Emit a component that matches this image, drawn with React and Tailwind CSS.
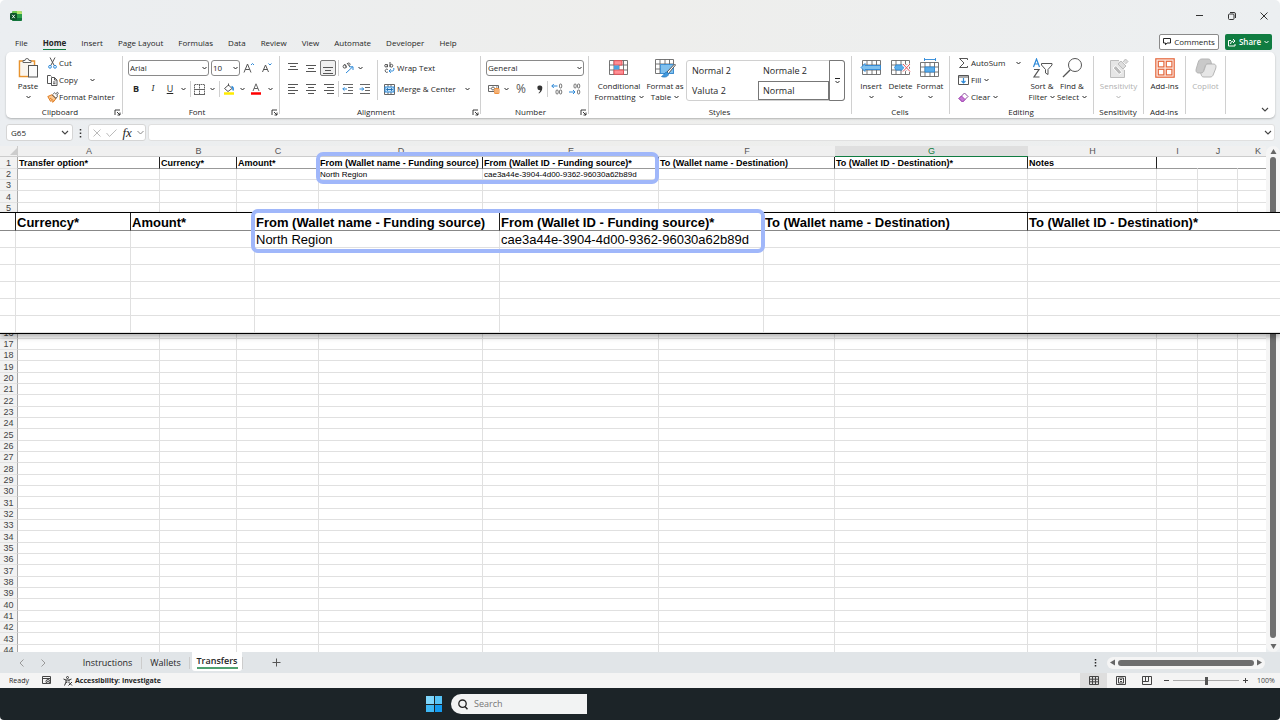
import React, { useState } from 'react';
import clsx from 'clsx';

// Small svg wrapper, every ribbon icon goes through this
const Icon = ({ w = 14, h = 14, className, children }) => (
    <svg
        width={w}
        height={h}
        viewBox={`0 0 ${w} ${h}`}
        fill="none"
        stroke="currentColor"
        strokeWidth="1"
        aria-hidden="true"
        className={clsx('shrink-0', className)}
    >
        {children}
    </svg>
);

const Chevron = ({ className }) => (
    <Icon w={5} h={4} className={className}><path d="M.5 1l2 2 2-2" /></Icon>
);

const BigChevron = () => (
    <Icon w={8} h={5} className="text-[#444]"><path d="M1 1l3 3 3-3" strokeWidth="1.1" /></Icon>
);

const Tool = ({ label, className, children }) => (
    <button type="button" aria-label={label} className={clsx('flex h-4 shrink-0 items-center justify-center', className)}>
        {children}
    </button>
);

const Divider = ({ className = 'h-4' }) => <span className={clsx('w-px shrink-0 bg-[#d0d0d0]', className)} />;

// Ribbon group with its caption and the optional dialog launcher
const Group = ({ title, launcher, className, children }) => (
    <section className={clsx('flex shrink-0 pt-1', className)}>
        <div className="flex min-w-0 flex-1 flex-col">
            <div className="flex h-[50px]">{children}</div>
            <div className="flex h-3 items-center pr-px">
                <span className="flex-1 text-center text-[8px] leading-3">{title}</span>
                {launcher && (
                    <button type="button" aria-label={`${title} settings`}>
                        <Icon w={7} h={7}><path d="M1 6V1h5M3 3l3 3M6 3.500V6H3.500" strokeWidth=".9" /></Icon>
                    </button>
                )}
            </div>
        </div>
        <Divider className="mb-1" />
    </section>
);

// Tall button: icon on top, one or two lines of text below
const TallButton = ({ icon, lines, arrow, className }) => (
    <button type="button" className={clsx('flex shrink-0 flex-col items-center text-[8px] leading-[11px] whitespace-nowrap', className)}>
        <span className="flex h-6 items-center">{icon}</span>
        <span>{lines[0]}</span>
        <span className="flex h-[11px] items-center gap-[3px]">
            {lines[1]}
            {arrow && <Chevron />}
        </span>
    </button>
);

const Dropdown = ({ label, value, className }) => (
    <div className={clsx('flex h-4 items-center rounded-[3px] border border-[#8a8a8a] bg-white pr-px', className)}>
        <select aria-label={label} defaultValue={value} className="min-w-0 flex-1 appearance-none bg-transparent pl-px text-[8px] leading-3 outline-none">
            <option>{value}</option>
        </select>
        <Chevron />
    </div>
);

const Lines = ({ rows }) => (
    <Icon w={12} h={12} className="text-[#555]">
        {rows.map(([x, y, len]) => <path key={y} d={`M${x} ${y}.5h${len}`} />)}
    </Icon>
);

/* ---------- icons ---------- */

const ExcelLogo = () => (
    <Icon w={12} h={12}>
        <rect x="2" y="1" width="10" height="10" rx="1.5" fill="#2b9e4b" stroke="none" />
        <path d="M3.500 1H7v3H2V2.500A1.500 1.500 0 013.500 1z" fill="#6cc94f" stroke="none" />
        <path d="M7 1h3.500A1.500 1.500 0 0112 2.500V4H7z" fill="#b4e36c" stroke="none" />
        <path d="M2 8h10v1.500a1.500 1.500 0 01-1.500 1.500h-7A1.500 1.500 0 012 9.500z" fill="#12743b" stroke="none" />
        <rect x="0" y="3" width="7" height="7" rx="1.200" fill="#0d5429" stroke="none" />
        <path d="M2.200 4.800l2.600 3.400M4.800 4.800L2.200 8.200" stroke="#fff" strokeWidth=".9" />
    </Icon>
);

const PasteIcon = () => (
    <Icon w={20} h={22}>
        <path d="M5 4H1.500v15.500H10" stroke="#e8932e" strokeWidth="1.500" />
        <path d="M13 4h3.500v4" stroke="#e8932e" strokeWidth="1.500" />
        <path d="M3 18V5.500h12V9h-5v9z" fill="#faf5ee" stroke="none" />
        <path d="M5 5.500V3.500h2a2 2 0 014 0h2v2z" fill="#fff" stroke="#666" />
        <rect x="10.500" y="8.500" width="9" height="11.500" fill="#fafafa" stroke="#555" />
    </Icon>
);

const CutIcon = () => (
    <Icon w={9} h={12}>
        <path d="M2 .5l4.200 8M7 .5L2.800 8.500" stroke="#555" />
        <circle cx="2" cy="9.800" r="1.400" stroke="#2b88d8" />
        <circle cx="7" cy="9.800" r="1.400" stroke="#2b88d8" />
    </Icon>
);

const CopyIcon = () => (
    <Icon w={11} h={12} className="text-[#555]">
        <path d="M4 9.500H.5v-8h3l1 1M4.500 3.500h3l2.500 2.500v5.500H4.500zM7.500 3.500V6H10M6 8h2.500M6 9.700h2.500" />
    </Icon>
);

const PainterIcon = () => (
    <Icon w={12} h={12}>
        <path d="M.8 5.500l4.200-1.800L9 7.500 6 11.300 4.300 9.800 3.500 10.300z" fill="#f9c58d" stroke="#e07b1f" />
        <path d="M3 7l3.500 2.700" stroke="#e07b1f" />
        <path d="M5 3.700L9 7.500M6.200 3l1.300-1.200 1.200 1 1.800-1.500L11.300 2.300 9.800 4l.7 1.200L9 7.500" stroke="#555" />
    </Icon>
);

const BordersIcon = () => (
    <Icon w={11} h={11} className="text-[#666]">
        <path d="M.5.500h10v10H.5zM5.500.5v10" strokeDasharray="1.500 .5" />
        <path d="M0 5.500h11M0 10.500h11" />
    </Icon>
);

const FillIcon = () => (
    <Icon w={12} h={12}>
        <path d="M1.500 5.500l4-3.500 3.500 3.500-4 3z" stroke="#555" />
        <path d="M5.500 3V.5" stroke="#555" />
        <path d="M8.500 3.500c1.500.5 2 2 1.500 4" stroke="#2b88d8" strokeWidth="1.500" />
        <path d="M1 10.500h10" stroke="#ffeb00" strokeWidth="2.500" />
    </Icon>
);

const FontColorIcon = () => (
    <Icon w={12} h={12}>
        <path d="M3 8L6 .8 9 8M4 5.500h4" stroke="#666" />
        <path d="M1 10.500h10" stroke="#f00" strokeWidth="2.500" />
    </Icon>
);

const GrowFont = ({ down }) => (
    <Icon w={12} h={12}>
        <path d={down ? 'M1.500 10L4.500 3l3 7M2.500 7.500h4' : 'M1 10.500L4.500 2l3.500 8.500M2.300 7.500h4.400'} stroke="#555" />
        <path d={down ? 'M7.500 1.500l1.500 1.500 1.500-1.500' : 'M8 3l1.500-1.500L11 3'} stroke="#2b88d8" />
    </Icon>
);

const OrientationIcon = () => (
    <Icon w={12} h={12}>
        <circle cx="2.700" cy="4.500" r="1.600" stroke="#555" />
        <path d="M4.500 5.500L2.500 2M5 1l3 4M7.300 3.500a1.300 1.300 0 10-1.800-1.500" stroke="#555" />
        <path d="M4 11l6.500-6M7.500 4.800H11V8" stroke="#2b88d8" />
    </Icon>
);

const IndentIcon = ({ out }) => (
    <Icon w={12} h={12}>
        <path d="M1 1.500h10M6 4.500h5M6 7.500h5M1 10.500h10" stroke="#666" />
        <path d={out ? 'M5 6H.8M2.500 4.300L.8 6l1.700 1.700' : 'M.5 6h4.200M3 4.300L4.700 6 3 7.700'} stroke="#2b88d8" />
    </Icon>
);

const WrapIcon = () => (
    <Icon w={11} h={12}>
        <circle cx="2" cy="3.700" r="1.300" stroke="#555" />
        <path d="M3.500 2.300v2.900M6 0v5.200" stroke="#555" />
        <circle cx="7.400" cy="3.700" r="1.400" stroke="#555" />
        <path d="M3.800 7.500a1.600 1.600 0 100 2.500" stroke="#555" />
        <path d="M9.800 6v1.500q0 1.500-1.500 1.500H5M6.800 7.200L5 9l1.800 1.800" stroke="#2b88d8" />
    </Icon>
);

const MergeIcon = () => (
    <Icon w={11} h={11}>
        <path d="M.5.500h10v10H.5zM4 .5V3M7 .5V3M4 8v2.500M7 8v2.500" stroke="#666" />
        <path d="M1 3h9v5H1z" fill="#cde6f8" stroke="#2b88d8" />
        <path d="M2.500 5.500h6M4 4.200L2.600 5.500 4 6.800M7 4.200l1.400 1.300L7 6.800" stroke="#1f6fb5" />
    </Icon>
);

const CurrencyIcon = () => (
    <Icon w={12} h={12}>
        <path d="M.5 2.500h10v6H.5z" stroke="#666" />
        <circle cx="5" cy="5.500" r="1.500" stroke="#666" />
        <path d="M1.500 5.500h1M8 4h1.500" stroke="#666" />
        <rect x="6" y="5" width="5.500" height="6" rx="1.500" fill="#f0903c" stroke="none" />
        <path d="M6.500 7h4.500M6.500 9h4.500" stroke="#fff" strokeWidth=".6" />
    </Icon>
);

const DecimalIcon = ({ less }) => (
    <Icon w={12} h={12}>
        <rect x="8.500" y="1" width="2.200" height="4" rx="1.100" stroke="#666" strokeWidth=".9" />
        <rect x="8.500" y="7" width="2.200" height="4" rx="1.100" stroke="#666" strokeWidth=".9" />
        <rect x="5" y={less ? 1 : 7} width="2.200" height="4" rx="1.100" stroke="#666" strokeWidth=".9" />
        <path d={less ? 'M0 9h6M4 7l2 2-2 2' : 'M6.500 3H.8M2.800 1l-2 2 2 2'} stroke="#2b88d8" />
    </Icon>
);

const GridBase = ({ x = 0, y = 0, w = 18, h = 14 }) => (
    <path
        d={`M${x + 0.5} ${y + 0.5}h${w}v${h}h-${w}zM${x + 0.5} ${y + 5}h${w}M${x + 0.5} ${y + 10}h${w}M${x + 5} ${y + 0.5}v${h}M${x + 10} ${y + 0.5}v${h}M${x + 14.5} ${y + 0.5}v${h}`}
        stroke="#666"
        strokeWidth=".9"
        fill="#fff"
    />
);

const ConditionalIcon = () => (
    <Icon w={20} h={16}>
        <GridBase />
        <path d="M5 .7h8V5H5zM5 10h9.500v4.300H5z" fill="#ff8f95" stroke="#e4545b" />
        <path d="M5 5.500h5v4H5z" fill="#4ba3e3" stroke="none" />
    </Icon>
);

const FormatTableIcon = () => (
    <Icon w={21} h={19}>
        <GridBase />
        <path d="M5.500 5.500h13v9h-13z" fill="#7fc0ee" stroke="#2b88d8" strokeWidth=".8" />
        <path d="M19.500 5l-7.500 8 1.500 1.500L20.500 6z" fill="#fff" stroke="#555" />
        <path d="M12 13c-2.500 0-2.500 3-5.500 4.500 3.500 1.500 7.500 0 7-3z" fill="#3f98dc" stroke="#1f6fb5" strokeWidth=".7" />
    </Icon>
);

const InsertCellsIcon = () => (
    <Icon w={22} h={16}>
        <GridBase x={2} />
        <path d="M1 7.500l4-4v2h15.500v4H5v2z" fill="#7fc0ee" stroke="#2b88d8" strokeWidth=".9" />
    </Icon>
);

const DeleteCellsIcon = () => (
    <Icon w={20} h={16}>
        <GridBase />
        <path d="M5 5h8.500l-1 5H5l-1.500-2.500z" fill="#5aadea" stroke="#2b88d8" strokeWidth=".8" />
        <path d="M12 4l7 7.500M19 4l-7 7.500" stroke="#fff" strokeWidth="3" />
        <path d="M12 4l7 7.500M19 4l-7 7.500" stroke="#e8545a" />
    </Icon>
);

const FormatCellsIcon = () => (
    <Icon w={20} h={20}>
        <path d="M4.500 0v3M15.500 0v3M4.500 1.500h11" stroke="#2b88d8" strokeWidth=".9" />
        <GridBase y={4} />
        <path d="M5 9h9.500v5H5z" fill="#5aadea" stroke="#2b88d8" strokeWidth=".8" />
    </Icon>
);

const SumIcon = () => (
    <Icon w={11} h={12} className="text-[#555]"><path d="M9.500 3V1.500h-8L6 6l-4.500 4.500h8V9" /></Icon>
);

const FillDownIcon = () => (
    <Icon w={11} h={11}>
        <path d="M.5.500h10v9H.5z" stroke="#555" />
        <path d="M.5 2h10" stroke="#555" />
        <path d="M5.500 3v5M3.500 6l2 2 2-2" stroke="#2b88d8" strokeWidth="1.200" />
    </Icon>
);

const ClearIcon = () => (
    <Icon w={11} h={11}>
        <path d="M1 6.500L6.500 1 10 4.500 4.500 10z" stroke="#8e4b9e" fill="#fff" />
        <path d="M1 6.500l2.500-2.500L7 7.500 4.500 10z" fill="#c77ad6" stroke="#a33fb5" />
    </Icon>
);

const SortIcon = () => (
    <Icon w={21} h={20}>
        <path d="M1.500 9L4.500 1l3 8M2.500 6h4" stroke="#2b88d8" strokeWidth="1.200" />
        <path d="M2 11.500h5l-5 7.500h5.500" stroke="#555" strokeWidth="1.200" />
        <path d="M9.500 5.500h10.500v1.500l-4 4.500v5l-2.500-1.500v-3.500l-4-4.500z" stroke="#555" />
    </Icon>
);

const FindIcon = () => (
    <Icon w={21} h={20} className="text-[#555]">
        <circle cx="13" cy="7" r="6.500" />
        <path d="M8.300 11.700L1 19" strokeWidth="1.300" />
    </Icon>
);

const SensitivityIcon = () => (
    <Icon w={20} h={21} className="text-[#bdbdbd]">
        <path d="M10 2.500H1.500v17h14V12" fill="#e6e6e6" />
        <path d="M4 10l3-2.500 6 7-3 2z" fill="#bbb" stroke="#fff" />
        <path d="M9 6l3-3 5 5-3 3zM14 4l2.500-3L19 3.500 16.500 6" fill="#ddd" />
    </Icon>
);

const AddinsIcon = () => (
    <Icon w={20} h={20}>
        <rect x=".8" y=".8" width="18.400" height="18.400" fill="#fdece6" stroke="#e4673c" strokeWidth="1.200" />
        {[3, 11].map((x) => [3, 11].map((y) => (
            <rect key={`${x}-${y}`} x={x + 0.3} y={y + 0.3} width="5.600" height="5.600" fill="#fff" stroke="#e4673c" strokeWidth="1.200" />
        )))}
    </Icon>
);

const CopilotIcon = () => (
    <Icon w={22} h={20} className="text-[#b5b5b5]">
        <path d="M7 1h6c2 0 2.500 1 3 3l.5 2h-4c-1.500 0-2 1-2.500 2.500L8.500 13C8 14.500 7.500 15 6 15H4c-3 0-3.500-2-2.500-5l1.800-6C4 2 5 1 7 1z" fill="#c9c9c9" />
        <path d="M15 19H9c-2 0-2.500-1-3-3l-.3-1.200C8 15 8.500 14 9 12.500L10.500 8C11 6.500 11.500 6 13 6h5c3 0 3.500 2 2.500 5l-2 5c-.7 2-1.500 3-3.500 3z" fill="#e6e6e6" />
    </Icon>
);

const Arrow = ({ d, className }) => (
    <Icon w={7} h={7} className={clsx('text-[#666]', className)}><path d={d} fill="currentColor" stroke="none" /></Icon>
);

/* ---------- title bar and ribbon ---------- */

const TABS = ['File', 'Home', 'Insert', 'Page Layout', 'Formulas', 'Data', 'Review', 'View', 'Automate', 'Developer', 'Help'];

const TitleBar = () => (
    <header className="flex h-8 shrink-0 items-center pl-[10px]">
        <ExcelLogo />
        <div className="ml-auto flex text-[#333]">
            <Tool label="Minimize" className="w-8"><Icon w={8} h={8}><path d="M0 3.500h7" /></Icon></Tool>
            <Tool label="Restore" className="w-8">
                <Icon w={8} h={8}><rect x=".5" y="2" width="5.500" height="5.500" rx="1" /><path d="M2 .5h4q1.500 0 1.500 1.500v4" /></Icon>
            </Tool>
            <Tool label="Close" className="w-8"><Icon w={8} h={8}><path d="M.5.500l7 7M7.500.5l-7 7" /></Icon></Tool>
        </div>
    </header>
);

const TabRow = () => (
    <nav className="flex h-5 shrink-0 items-center justify-between pr-2 pl-[15px]">
        <div className="flex gap-[15px] pt-px">
            {TABS.map((tab) => (
                <a
                    key={tab}
                    href="#"
                    className={clsx('border-b text-[8px] leading-[13px]', tab === 'Home' ? 'border-[#107c41] font-bold' : 'border-transparent')}
                >
                    {tab}
                </a>
            ))}
        </div>
        <div className="flex gap-[6px] text-[8px] leading-3">
            <button type="button" className="flex h-4 w-[60px] items-center justify-center gap-[3px] rounded-[2px] border border-[#8a8a8a] bg-white">
                <Icon w={8} h={8}><path d="M.5.500h7v4.500H4L2.500 6.800V5h-2z" /></Icon>
                Comments
            </button>
            <button type="button" className="flex h-4 w-[47px] items-center justify-center gap-[3px] rounded-[2px] bg-[#107c41] font-semibold text-white">
                <Icon w={8} h={9}><path d="M3 2.500H.5v5.500h6.500V6M2.500 6q0-3 3-3M5 1l2 2-2 2" /></Icon>
                Share
                <Chevron />
            </button>
        </div>
    </nav>
);

const ClipboardGroup = () => (
    <Group title="Clipboard" launcher className="w-[117px]">
        <TallButton icon={<PasteIcon />} lines={['Paste', '']} arrow className="ml-[9px] w-[26px]" />
        <div className="flex flex-col gap-[3px] pl-[5px] text-[8px] leading-3">
            <button type="button" className="flex h-[14px] items-center"><span className="flex w-[13px] justify-center"><CutIcon /></span>Cut</button>
            <button type="button" className="flex h-[14px] items-center">
                <span className="flex w-[13px] justify-center"><CopyIcon /></span>Copy<Chevron className="ml-3" />
            </button>
            <button type="button" className="flex h-[14px] items-center whitespace-nowrap"><span className="flex w-[13px] justify-center"><PainterIcon /></span>Format Painter</button>
        </div>
    </Group>
);

const FontGroup = () => (
    <Group title="Font" launcher className="w-[157px]">
        <div className="flex flex-col gap-[5px] pt-1 pl-[5px]">
            <div className="flex items-center">
                <Dropdown label="Font name" value="Arial" className="mr-[2px] w-[81px]" />
                <Dropdown label="Font size" value="10" className="w-[29px]" />
                <Tool label="Increase font size" className="w-[18px]"><GrowFont /></Tool>
                <Tool label="Decrease font size" className="w-[18px]"><GrowFont down /></Tool>
            </div>
            <div className="flex items-center text-[9px]">
                <Tool label="Bold" className="w-4 font-bold">B</Tool>
                <Tool label="Italic" className="w-[18px] font-serif italic">I</Tool>
                <Tool label="Underline" className="w-4 underline">U</Tool>
                <Tool label="Underline styles" className="mr-[2px] w-[10px]"><Chevron /></Tool>
                <Divider />
                <Tool label="Borders" className="w-4"><BordersIcon /></Tool>
                <Tool label="Border styles" className="mr-px w-[11px]"><Chevron /></Tool>
                <Divider />
                <Tool label="Fill color" className="w-[18px]"><FillIcon /></Tool>
                <Tool label="Fill colors" className="w-2"><Chevron /></Tool>
                <Tool label="Font color" className="w-5"><FontColorIcon /></Tool>
                <Tool label="Font colors" className="w-2"><Chevron /></Tool>
            </div>
        </div>
    </Group>
);

const AlignmentGroup = () => (
    <Group title="Alignment" launcher className="w-[201px]">
        <div className="flex flex-col gap-[5px] pt-1 pl-1">
            <div className="flex items-center">
                <Tool label="Top align" className="w-[18px]"><Lines rows={[[1, 1, 10], [3, 4, 6], [1, 7, 10]]} /></Tool>
                <Tool label="Middle align" className="w-[18px]"><Lines rows={[[1, 3, 10], [3, 6, 6], [1, 9, 10]]} /></Tool>
                <Tool label="Bottom align" className="w-4 rounded-[2px] border border-[#777] bg-[#efefef]"><Lines rows={[[1, 5, 10], [3, 8, 6], [1, 11, 10]]} /></Tool>
                <span className="w-[2px]" />
                <Divider />
                <Tool label="Orientation" className="w-[18px]"><OrientationIcon /></Tool>
                <Tool label="Orientation styles" className="w-[6px]"><Chevron /></Tool>
            </div>
            <div className="flex items-center">
                <Tool label="Align left" className="w-[18px]"><Lines rows={[[1, 1, 10], [1, 4, 7], [1, 7, 10], [1, 10, 7]]} /></Tool>
                <Tool label="Center" className="w-[18px]"><Lines rows={[[1, 1, 10], [3, 4, 6], [1, 7, 10], [3, 10, 6]]} /></Tool>
                <Tool label="Align right" className="w-[18px]"><Lines rows={[[1, 1, 10], [4, 4, 7], [1, 7, 10], [4, 10, 7]]} /></Tool>
                <Divider />
                <Tool label="Decrease indent" className="w-[18px]"><IndentIcon out /></Tool>
                <Tool label="Increase indent" className="w-4"><IndentIcon /></Tool>
            </div>
        </div>
        <Divider className="mt-1 ml-1 h-10" />
        <div className="flex flex-1 flex-col gap-[5px] pt-1 pl-[6px] text-[8px] leading-3">
            <button type="button" className="flex h-4 items-center gap-[2px]"><WrapIcon />Wrap Text</button>
            <button type="button" className="flex h-4 items-center gap-[2px] whitespace-nowrap"><MergeIcon />Merge &amp; Center<Chevron className="mr-[10px] ml-auto" /></button>
        </div>
    </Group>
);

const NumberGroup = () => (
    <Group title="Number" launcher className="w-[108px]">
        <div className="flex flex-col gap-[5px] pt-1 pl-[5px]">
            <Dropdown label="Number format" value="General" className="w-[98px]" />
            <div className="flex items-center">
                <Tool label="Accounting format" className="w-4"><CurrencyIcon /></Tool>
                <Tool label="Accounting formats" className="w-2"><Chevron /></Tool>
                <Tool label="Percent style" className="w-[22px] text-xs text-[#555]">%</Tool>
                <Tool label="Comma style" className="w-[15px]">
                    <Icon w={6} h={9}><path d="M3 .5a2.300 2.300 0 012.300 2.500c0 2.500-1.500 4.500-3.300 5.500l-.5-.5c1.200-1 1.700-2 1.700-3A2.300 2.300 0 113 .5z" fill="#333" stroke="none" /></Icon>
                </Tool>
                <Divider />
                <Tool label="Increase decimal" className="w-[18px]"><DecimalIcon /></Tool>
                <Tool label="Decrease decimal" className="w-[17px]"><DecimalIcon less /></Tool>
            </div>
        </div>
    </Group>
);

const StylesGroup = () => (
    <Group title="Styles" className="w-[263px]">
        <TallButton icon={<ConditionalIcon />} lines={['Conditional', 'Formatting']} arrow className="ml-[5px] w-[50px]" />
        <TallButton icon={<FormatTableIcon />} lines={['Format as', 'Table']} arrow className="w-[42px]" />
        <div className="mt-1 flex h-[41px] w-[159px] rounded-[3px] border border-[#d0d0d0] text-[9px]">
            <div className="grid flex-1 grid-cols-2 grid-rows-2 text-left">
                <button type="button" className="pl-[5px] text-left font-medium">Normal 2</button>
                <button type="button" className="pl-[5px] text-left">Normale 2</button>
                <button type="button" className="pl-[5px] text-left">Valuta 2</button>
                <button type="button" className="border border-[#777] pl-1 text-left">Normal</button>
            </div>
            <button type="button" aria-label="More styles" className="-my-px -mr-px flex w-4 items-center justify-center rounded-r-[3px] border border-[#777]">
                <Icon w={5} h={6}><path d="M0 .500h5M.5 3l2 2 2-2" /></Icon>
            </button>
        </div>
    </Group>
);

const CellsGroup = () => (
    <Group title="Cells" className="w-[98px]">
        <TallButton icon={<InsertCellsIcon />} lines={['Insert', '']} arrow className="ml-1 w-[30px]" />
        <TallButton icon={<DeleteCellsIcon />} lines={['Delete', '']} arrow className="w-[29px]" />
        <TallButton icon={<FormatCellsIcon />} lines={['Format', '']} arrow className="w-[30px]" />
    </Group>
);

const EditingGroup = () => (
    <Group title="Editing" className="w-[144px]">
        <div className="flex w-[77px] flex-col gap-[3px] pl-2 text-[8px] leading-3">
            <button type="button" className="flex h-[14px] items-center gap-[2px]"><SumIcon />AutoSum<Chevron className="mr-[6px] ml-auto" /></button>
            <button type="button" className="flex h-[14px] items-center gap-[2px]"><FillDownIcon />Fill<Chevron className="ml-px" /></button>
            <button type="button" className="flex h-[14px] items-center gap-[2px]"><ClearIcon />Clear<Chevron className="ml-px" /></button>
        </div>
        <TallButton icon={<SortIcon />} lines={['Sort &', 'Filter']} arrow className="w-[30px]" />
        <TallButton icon={<FindIcon />} lines={['Find &', 'Select']} arrow className="w-[30px]" />
    </Group>
);

const Ribbon = () => (
    <div className="mr-[5px] ml-[6px] flex h-[66px] shrink-0 rounded-[5px] bg-white shadow-[0_1px_2px_rgba(0,0,0,0.25)]">
        <ClipboardGroup />
        <FontGroup />
        <AlignmentGroup />
        <NumberGroup />
        <StylesGroup />
        <CellsGroup />
        <EditingGroup />
        <Group title="Sensitivity" className="w-[50px]">
            <TallButton icon={<SensitivityIcon />} lines={['Sensitivity', '']} arrow className="w-[49px] text-[#b0b0b0]" />
        </Group>
        <Group title="Add-ins" className="w-[42px]">
            <TallButton icon={<AddinsIcon />} lines={['Add-ins', '']} className="w-[41px]" />
        </Group>
        <Group title="" className="w-10">
            <TallButton icon={<CopilotIcon />} lines={['Copilot', '']} className="w-[39px] text-[#b0b0b0]" />
        </Group>
        <button type="button" aria-label="Collapse ribbon" className="mt-auto mr-[6px] mb-[6px] ml-auto"><BigChevron /></button>
    </div>
);

const FormulaBar = () => (
    <div className="flex h-7 shrink-0 items-center pt-px pr-[5px] pl-[6px]">
        <label className="flex h-[17px] w-[67px] items-center rounded-[3px] border border-[#d5d5d5] bg-white pr-[3px]">
            <input aria-label="Name box" defaultValue="G65" className="w-0 flex-1 pl-1 text-[8px] outline-none" />
            <BigChevron />
        </label>
        <Icon w={15} h={10} className="text-[#333]"><path d="M7.500 1v1.500M7.500 4.500V6M7.500 8v1.500" strokeWidth="1.500" /></Icon>
        <div className="mr-[2px] flex h-[17px] w-[58px] items-center justify-between rounded-[3px] border border-[#d5d5d5] bg-white pr-px pl-1">
            <Tool label="Cancel" className="text-[#bbb]"><Icon w={8} h={8}><path d="M.5.500l7 7M7.500.5l-7 7" /></Icon></Tool>
            <Tool label="Enter" className="text-[#bbb]"><Icon w={11} h={8}><path d="M.5 4l3 3.500 7-7" /></Icon></Tool>
            <button type="button" className="font-['Liberation_Serif',serif] text-[13px] leading-3 italic">fx</button>
            <Icon w={7} h={5} className="text-[#888]"><path d="M.5 1l3 3 3-3" /></Icon>
        </div>
        <label className="flex h-[17px] min-w-0 flex-1 items-center rounded-[3px] border border-[#e0e0e0] bg-white pr-[2px]">
            <input aria-label="Formula" className="min-w-0 flex-1 outline-none" />
            <BigChevron />
        </label>
    </div>
);

/* ---------- worksheet ---------- */

const COLUMNS = [
    { id: 'A', width: 'w-[142px]', title: 'Transfer option*' },
    { id: 'B', width: 'w-[77px]', title: 'Currency*' },
    { id: 'C', width: 'w-[82px]', title: 'Amount*' },
    { id: 'D', width: 'w-[164px]', title: 'From (Wallet name - Funding source)', value: 'North Region' },
    { id: 'E', width: 'w-[176px]', title: 'From (Wallet ID - Funding source)*', value: 'cae3a44e-3904-4d00-9362-96030a62b89d' },
    { id: 'F', width: 'w-[176px]', title: 'To (Wallet name - Destination)' },
    { id: 'G', width: 'w-[193px]', title: 'To (Wallet ID - Destination)*' },
    { id: 'H', width: 'w-[129px]', title: 'Notes' },
    { id: 'I', width: 'w-[41px]', title: '' },
    { id: 'J', width: 'w-[40px]', title: '' },
    { id: 'K', width: 'w-[40px]', title: '' },
];

const ZOOM_WIDTHS = ['w-[16px]', 'w-[115px]', 'w-[124px]', 'w-[245px]', 'w-[264px]', 'w-[264px]', 'w-[290px]'];
const ZOOM_COLUMNS = COLUMNS.slice(0, 7);

const SheetTable = () => (
    <table className="w-[1278px] min-w-full table-fixed border-separate border-spacing-0 font-['Liberation_Sans',sans-serif] text-[9px] leading-[9px] whitespace-nowrap text-black">
        <colgroup>
            <col className="w-[18px]" />
            {COLUMNS.map((c) => <col key={c.id} className={c.width} />)}
        </colgroup>
        <thead>
            <tr className="h-[11px] text-[#555]">
                <th aria-label="Select all" className="border-r border-b border-[#ccc] bg-[#f0f0f0] p-0">
                    <Icon w={7} h={7} className="ml-auto text-[#ccc]"><path d="M7 0v7H0z" fill="currentColor" stroke="none" /></Icon>
                </th>
                {COLUMNS.map(({ id }) => (
                    <th
                        key={id}
                        className={clsx(
                            'border-b p-0 pt-px text-center font-normal',
                            id === 'G' ? 'border-[#107c41] bg-[#dfdfdf] text-[#107c41]' : 'border-[#ccc] bg-[#f0f0f0]'
                        )}
                    >
                        {id}
                    </th>
                ))}
            </tr>
        </thead>
        <tbody>
            {Array.from({ length: 44 }, (_, i) => i + 1).map((row) => (
                <tr key={row} className="h-[11px] nth-[3n+1]:h-3">
                    <th className="border-r border-b border-r-[#aaa] border-b-[#e2e2e2] bg-[#f2f2f2] p-0 pt-px text-center font-normal text-[#444]">{row}</th>
                    {COLUMNS.map((c) => (
                        <td
                            key={c.id}
                            className={clsx(
                                'border-r border-b p-0 pt-px pl-px',
                                row === 1 ? 'border-b-[#999] font-bold' : 'border-[#e0e0e0] text-[8px]',
                                row === 1 && (c.id < 'I' ? 'border-r-[#222]' : 'border-r-transparent')
                            )}
                        >
                            {row === 1 && c.title}
                            {row === 2 && c.value}
                        </td>
                    ))}
                </tr>
            ))}
        </tbody>
    </table>
);

// Enlarged strip of the first rows, floats over the sheet
const ZoomStrip = () => (
    <div className="absolute inset-x-0 top-[66px] h-[122px] border-y border-black bg-white shadow-[0_3px_5px_rgba(0,0,0,0.3)]">
        <div className="h-full overflow-hidden">
            <table className="w-[1318px] min-w-full table-fixed border-separate border-spacing-0 font-['Liberation_Sans',sans-serif] text-[13px] leading-[15px] whitespace-nowrap text-black">
                <colgroup>
                    {ZOOM_COLUMNS.map((c, i) => <col key={c.id} className={ZOOM_WIDTHS[i]} />)}
                </colgroup>
                <tbody>
                    {[1, 2, 3, 4, 5, 6, 7].map((row) => (
                        <tr key={row} className="h-[17px] first:h-[18px]">
                            {ZOOM_COLUMNS.map((c, i) => (
                                <td
                                    key={c.id}
                                    className={clsx(
                                        'border-r border-b p-0 pt-px pl-px',
                                        row === 1 ? 'border-r-[#222] border-b-[#888] font-bold' : 'border-[#e0e0e0]'
                                    )}
                                >
                                    {i > 0 && row === 1 && c.title}
                                    {i > 0 && row === 2 && c.value}
                                </td>
                            ))}
                        </tr>
                    ))}
                </tbody>
            </table>
        </div>
    </div>
);

const Sheet = () => (
    <main className="relative flex min-h-0 flex-1">
        <div className="min-w-0 flex-1 overflow-hidden bg-white">
            <SheetTable />
        </div>
        <div className="flex w-[14px] shrink-0 flex-col items-center gap-[2px] rounded-full bg-[#f5f5f5] py-[2px]">
            <Arrow d="M.5 6l3-5 3 5z" />
            <div className="w-[6px] flex-1 rounded-full bg-[#6e6e6e]" />
            <span className="h-px" />
            <Arrow d="M.5 1l3 5 3-5z" />
        </div>
        <ZoomStrip />
        {/* highlights on the funding source cells */}
        <div className="absolute top-[6px] left-[316px] h-8 w-[343px] rounded-[7px] border-4 border-[#a0b7fa]" />
        <div className="absolute top-[63px] left-[251px] h-[44px] w-[514px] rounded-[7px] border-4 border-[#a0b7fa]" />
    </main>
);

const SheetTabs = ({ active, onSelect }) => (
    <div className="flex h-[21px] shrink-0 items-center bg-[#e1e5e8] text-[9px] leading-3">
        <div className="flex w-[74px] gap-[17px] pl-[19px] text-[#999]">
            <Icon w={5} h={8}><path d="M4.500.5L1 4l3.500 3.500" /></Icon>
            <Icon w={5} h={8}><path d="M.5.500L4 4 .5 7.500" /></Icon>
        </div>
        {['Instructions', 'Wallets', 'Transfers'].map((name) => (
            <React.Fragment key={name}>
                <button
                    type="button"
                    onClick={() => onSelect(name)}
                    className={clsx(
                        name === 'Instructions' ? 'w-[67px]' : name === 'Wallets' ? 'w-[47px]' : 'w-[50px]',
                        name === active ? 'mb-[2px] ml-[2px] h-[19px] rounded-b-[3px] bg-white font-semibold' : 'h-[19px]'
                    )}
                >
                    <span className={clsx('inline-block', name === active && 'border-b-2 border-[#4fa070]')}>{name}</span>
                </button>
                <span className="h-3 w-px bg-[#ccc]" />
            </React.Fragment>
        ))}
        <Tool label="New sheet" className="ml-6 w-[18px]"><Icon w={9} h={9} className="text-[#555]"><path d="M4.500.5v8M.5 4.500h8" /></Icon></Tool>
        <Icon w={3} h={8} className="ml-auto"><path d="M1.500 0v1.500M1.500 3v1.500M1.500 6v1.500" strokeWidth="1.500" /></Icon>
        <div className="mr-[15px] ml-[10px] flex h-3 w-[158px] items-center gap-[2px] rounded-full bg-[#f5f5f5] px-[2px]">
            <Arrow d="M6 .5v6l-5-3z" />
            <div className="h-[6px] flex-1 rounded-full bg-[#6e6e6e]" />
            <Arrow d="M1 .5v6l5-3z" />
        </div>
    </div>
);

const StatusBar = () => (
    <div className="flex h-[15px] shrink-0 items-center bg-[#f4f4f4] pl-[9px] text-[7px] leading-3">
        <span className="w-[33px]">Ready</span>
        <Icon w={10} h={9} className="text-[#444]"><path d="M.5.500h8v7h-8zM.5 2.500h8" /><circle cx="6" cy="5.500" r="2" fill="#f4f4f4" /><circle cx="6" cy="5.500" r=".5" /></Icon>
        <button type="button" className="ml-[11px] flex items-center gap-[2px] font-bold">
            <Icon w={10} h={10} className="text-[#333]">
                <circle cx="4.500" cy="1.500" r="1" />
                <path d="M.5 3l2.500 1v2L1.500 9.500M8.500 3L6 4v1.500M3 4h3M3 6.500l1.500-.5M5.500 6l3.500 3.500M9 6L5.500 9.500" />
            </Icon>
            Accessibility: Investigate
        </button>
        <div className="ml-auto flex items-center text-[#444]">
            <Tool label="Normal view" className="w-[27px] bg-[#dedede]"><Icon w={10} h={9}><path d="M.5.500h9v8h-9zM3.500.5v8M6.500.5v8M.5 3.200h9M.5 5.800h9" /></Icon></Tool>
            <Tool label="Page layout view" className="w-[27px]"><Icon w={10} h={9}><path d="M.5.500h9v8h-9zM2.500 2h5v5h-5zM4 3.500h2M4 5.500h2" /></Icon></Tool>
            <Tool label="Page break view" className="w-[26px]"><Icon w={10} h={9}><path d="M.5.500h9v8h-9zM3.500.5v5M6.500.5v5M.5 5.500h6" /></Icon></Tool>
            <Tool label="Zoom out" className="w-[13px]"><Icon w={7} h={7}><path d="M1 3.500h5" /></Icon></Tool>
            <input
                type="range"
                aria-label="Zoom"
                defaultValue="50"
                className="h-2 w-[66px] appearance-none bg-[linear-gradient(#aaa,#aaa)] bg-[length:100%_1px] bg-center bg-no-repeat [&::-webkit-slider-thumb]:h-2 [&::-webkit-slider-thumb]:w-[3px] [&::-webkit-slider-thumb]:appearance-none [&::-webkit-slider-thumb]:bg-[#555]"
            />
            <Tool label="Zoom in" className="w-[13px]"><Icon w={7} h={7}><path d="M1 3.500h5M3.500 1v5" /></Icon></Tool>
            <span className="w-7 pl-[5px]">100%</span>
        </div>
    </div>
);

const Taskbar = () => (
    <footer className="flex h-8 shrink-0 items-center justify-center rounded-b-[4px] bg-[#1c2428] pr-[267px]">
        <button type="button" aria-label="Start" className="mr-[9px] grid size-4 grid-cols-2 gap-px">
            <span className="bg-[#7fd6fb]" />
            <span className="bg-[#56c3f6]" />
            <span className="bg-[#3fb8f5]" />
            <span className="bg-[#149bf0]" />
        </button>
        <label className="flex h-5 w-[136px] items-center gap-[6px] rounded-l-full bg-[#f2f3f3] pl-[7px]">
            <Icon w={10} h={11} className="text-[#222]"><circle cx="4.500" cy="4.700" r="3.700" strokeWidth="1.300" /><path d="M7 7.500l2.500 2.700" strokeWidth="1.500" /></Icon>
            <input type="search" aria-label="Search" placeholder="Search" className="min-w-0 flex-1 bg-transparent text-[9px] outline-none placeholder:text-[#777]" />
        </label>
    </footer>
);

function App() {
    const [activeSheet, setActiveSheet] = useState('Transfers');

    return (
        <div className="flex h-screen flex-col overflow-hidden bg-white font-['Open_Sans',sans-serif] text-[#262626]">
            <div className="flex min-h-0 flex-1 flex-col rounded-t-[5px] bg-gradient-to-r from-[#ebeef1] via-[#eeeeec] to-[#eceff1]">
                <TitleBar />
                <TabRow />
                <Ribbon />
                <FormulaBar />
                <Sheet />
            </div>
            <SheetTabs active={activeSheet} onSelect={setActiveSheet} />
            <StatusBar />
            <Taskbar />
        </div>
    );
}

export default App;
